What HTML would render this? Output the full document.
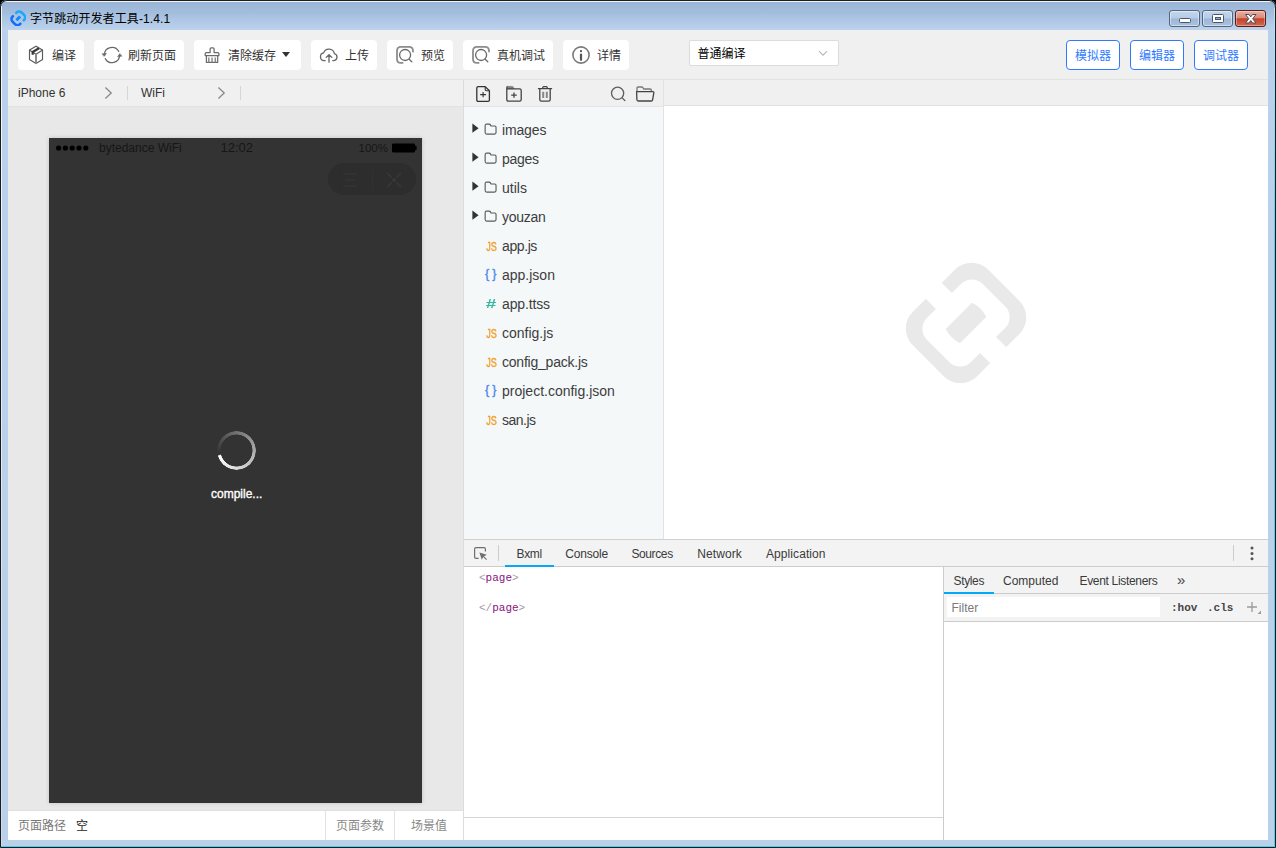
<!DOCTYPE html>
<html lang="zh-CN">
<head>
<meta charset="utf-8">
<title>字节跳动开发者工具-1.4.1</title>
<style>
*{box-sizing:border-box;margin:0;padding:0}
html,body{width:1276px;height:848px;overflow:hidden;background:#000}
body{font-family:"Liberation Sans","Noto Sans CJK SC",sans-serif;font-size:12px;color:#333;position:relative}
.abs{position:absolute}
#win{position:absolute;left:0;top:0;width:1276px;height:848px;background:#b9d1ea;border-radius:7px 7px 0 0;overflow:hidden}
#frame-dark{position:absolute;left:0;top:0;width:1276px;height:848px;border:1px solid #1c1c1c;border-radius:7px 7px 0 0;z-index:50;pointer-events:none}
#titlebar{position:absolute;left:1px;top:1px;width:1274px;height:29px;background:linear-gradient(#98b4d6 0%,#a3bddd 40%,#b4cce8 80%,#bcd3ec 100%)}
#title{position:absolute;left:30px;top:11px;letter-spacing:.1px;font-size:12px;line-height:16px;color:#000;white-space:nowrap}
#content{position:absolute;left:8px;top:30px;width:1260px;height:810px;background:#fff;overflow:hidden}
/* toolbar */
#toolbar{position:absolute;left:0;top:0;width:1260px;height:50px;background:#f0f0f0;border-bottom:1px solid #e2e2e2}
.tb{position:absolute;top:10px;height:30px;background:#fff;border-radius:4px;font-size:12px;line-height:30px;color:#333;white-space:nowrap}
.tb span{position:absolute;top:1px}
.tb svg{position:absolute}
.rb{position:absolute;top:10px;height:30px;background:#fff;border:1px solid #2f7bff;border-radius:4px;color:#2f7bff;font-size:12px;line-height:30px;text-align:center}
#sel{position:absolute;left:681px;top:10px;width:150px;height:26px;background:#fff;border:1px solid #dcdcdc;border-radius:2px;font-size:12px;line-height:26px;color:#000;padding-left:7.5px}
/* second row */
#simbar{position:absolute;left:0;top:50px;width:455px;height:27px;background:#f0f0f0;border-bottom:1px solid #e2e2e2;font-size:12px;color:#333}
#vline{position:absolute;left:455px;top:50px;width:1px;height:760px;background:#dcdcdc}
#sim{position:absolute;left:0;top:77px;width:455px;height:703px;background:#e8e8e8}
#phone{position:absolute;left:41px;top:31px;width:373px;height:665px;background:#333;box-shadow:0 0 4px rgba(0,0,0,.18)}
#simfoot{position:absolute;left:0;top:780px;width:455px;height:30px;background:#fff;border-top:1px solid #e0e0e0;font-size:12px;color:#666;line-height:30px}
/* tree */
#treebar{position:absolute;left:456px;top:50px;width:199px;height:26px;background:#f0f0f0}
#tree{position:absolute;left:456px;top:76px;width:199px;height:433px;background:#f4f8f9;border-top:1px solid #e4e4e4}
#treeline{position:absolute;left:655px;top:50px;width:1px;height:459px;background:#e2e2e2}
.ti{position:absolute;left:0;width:199px;height:29px;font-size:14px;line-height:29px;color:#3d3d3d;white-space:nowrap}
.ti .nm{position:absolute;left:38px;top:0}
.ti .ic{position:absolute;top:0;width:14px;text-align:center;transform-origin:50% 50%;line-height:29px}
/* editor */
#edbar{position:absolute;left:656px;top:50px;width:604px;height:26px;background:#f0f0f0;border-bottom:1px solid #e2e2e2}
#editor{position:absolute;left:656px;top:76px;width:604px;height:433px;background:#fff}
/* devtools */
#dtbar{position:absolute;left:456px;top:509px;width:804px;height:28px;background:#f3f3f3;border-top:1px solid #d0d0d0;border-bottom:1px solid #ccc;font-size:12px;color:#333}
#dtbar .t{position:absolute;top:2px;line-height:25px;color:#3a3a3a}
#elements{position:absolute;left:456px;top:537px;width:479px;height:250px;background:#fff;font-family:"Liberation Mono","DejaVu Sans Mono",monospace;font-size:11px}
#elfoot{position:absolute;left:456px;top:787px;width:479px;height:23px;background:#fff;border-top:1px solid #d4d4d4}
#stline{position:absolute;left:935px;top:537px;width:1px;height:273px;background:#ccc}
#styles{position:absolute;left:936px;top:537px;width:324px;height:273px;background:#fff}
#sttabs{position:absolute;left:0;top:0;width:324px;height:27px;background:#f3f3f3;border-bottom:1px solid #ccc;font-size:12px}
#sttabs .t{position:absolute;top:1px;line-height:26px;color:#3a3a3a}
#stfilter{position:absolute;left:0;top:27px;width:324px;height:28px;background:#f3f3f3;border-bottom:1px solid #ccc}
.mono{font-family:"Liberation Mono","DejaVu Sans Mono",monospace;font-size:11px;line-height:14px;color:#444;font-weight:bold}
.wc{position:absolute;top:10px;width:31px;height:17px;border:1px solid #55657d;border-radius:3px;background:linear-gradient(#c3d6ec 0%,#b5cbe6 48%,#9cb7d8 52%,#a9c2e0 100%);box-shadow:inset 0 0 0 1px rgba(255,255,255,.45)}
.wc svg{position:absolute;left:0;top:0}
.wx{border-color:#5c1d1a;background:linear-gradient(#eab1a4 0%,#dc8a78 45%,#c3432b 52%,#d4694f 100%);box-shadow:inset 0 0 0 1px rgba(255,255,255,.35)}
</style>
</head>
<body>
<div id="win">
  <div id="titlebar"></div>
  <div class="abs" style="left:5px;top:1px;width:1266px;height:1px;background:rgba(255,255,255,.85)"></div>
  <svg class="abs" style="left:9.7px;top:9.5px" width="16.6" height="16.6" viewBox="-58 -58 116 116"><g transform="rotate(45)" fill="none" stroke-width="18" stroke-linecap="round"><path d="M-37 -17 V-20 A25 25 0 0 1 -12 -45 H12 A25 25 0 0 1 37 -20 V-17" stroke="#1aa9ff"/><path d="M-37 17 V20 A25 25 0 0 0 -12 45 H12 A25 25 0 0 0 37 20 V17" stroke="#0d6eff"/><path d="M-10.5 -18 Q0 -21 10.5 -18 V18 Q0 21 -10.5 18 Z" fill="#1687ff" stroke="none"/></g></svg>
  <div class="wc" style="left:1169px"><svg width="29" height="15" viewBox="0 0 29 15"><rect x="9.5" y="7.5" width="11" height="4" rx="1" fill="#fff" stroke="#4a5668" stroke-width="1"/></svg></div>
  <div class="wc" style="left:1202px"><svg width="29" height="15" viewBox="0 0 29 15"><rect x="9.5" y="3.5" width="11" height="8" rx="1" fill="#fff" stroke="#4a5668" stroke-width="1"/><rect x="12.5" y="6.5" width="5" height="2" fill="#93aed0" stroke="#4a5668" stroke-width="1"/></svg></div>
  <div class="wc wx" style="left:1235px"><svg width="29" height="15" viewBox="0 0 29 15"><path d="M9.5 3.5 H13 L14.75 5.9 L16.5 3.5 H20 L16.7 7.75 L20 12 H16.5 L14.75 9.6 L13 12 H9.5 L12.8 7.75 Z" fill="#fff" stroke="#46505f" stroke-width="1" stroke-linejoin="round"/></svg></div>
  <div id="title">字节跳动开发者工具-1.4.1</div>
  <div id="content">
    <div id="toolbar">
      <div class="tb" style="left:10px;width:66px">
        <svg style="left:10px;top:5px" width="16" height="20" viewBox="0 0 16 20" fill="none" stroke="#5c5c5c" stroke-width="1.2" stroke-linejoin="round" stroke-linecap="round"><path d="M8 1.2 L14.5 5 V14.6 L8 18.4 L1.5 14.6 V5 Z"/><path d="M1.7 5.2 L8 9.2 L14.3 5.2"/><path d="M8 9.6 V18.2" stroke="#8a8a8a" stroke-width="2"/><path d="M11 3.2 L4.7 7 V9.8" stroke="#383838" stroke-width="2.2" stroke-linecap="butt"/></svg>
        <span style="left:34px">编译</span></div>
      <div class="tb" style="left:86px;width:90px">
        <svg style="left:7px;top:5px" width="22" height="20" viewBox="0 0 22 20" fill="none" stroke="#6a6a6a" stroke-width="1.25" stroke-linecap="round" stroke-linejoin="round"><path d="M3.4 10 A7.6 7.6 0 0 1 17.7 6.4"/><path d="M18.6 10 A7.6 7.6 0 0 1 4.3 13.6"/><path d="M1.4 8.8 L5.4 8.4 L3.3 11.2 Z" fill="#6a6a6a" stroke-width=".6"/><path d="M20.6 11.2 L16.6 11.6 L18.7 8.8 Z" fill="#6a6a6a" stroke-width=".6"/></svg>
        <span style="left:34px">刷新页面</span></div>
      <div class="tb" style="left:186px;width:107px">
        <svg style="left:9px;top:6px" width="18" height="19" viewBox="0 0 18 19" fill="none" stroke="#6a6a6a" stroke-width="1.25" stroke-linejoin="round"><path d="M7.1 3 Q7.1 1.8 8.3 1.8 H9.9 Q11.1 1.8 11.1 3 V6.6 H14.9 Q15.9 6.6 15.9 7.6 V9.5 H2.2 V7.6 Q2.2 6.6 3.2 6.6 H7.1 Z"/><path d="M3.4 9.7 V16.3 H14.7 V9.7"/><path d="M5.8 11.6 V16.2 M9.05 11.6 V16.2 M12.3 11.6 V16.2" stroke="#8a8a8a" stroke-width="1.5"/></svg>
        <span style="left:34px">清除缓存</span>
        <svg style="left:88px;top:12px" width="8" height="5" viewBox="0 0 8 5"><path d="M0 0 H8 L4 5 Z" fill="#333"/></svg></div>
      <div class="tb" style="left:303px;width:66px">
        <svg style="left:8px;top:7.6px" width="20" height="16" viewBox="0 0 20 16" fill="none" stroke="#666" stroke-width="1.3" stroke-linecap="round" stroke-linejoin="round"><path d="M6.2 12.6 H5 A3.9 3.9 0 0 1 4.6 4.9 A5.6 5.6 0 0 1 15.4 5.6 A3.6 3.6 0 0 1 15 12.6 H13.8"/><path d="M10 14.2 V6.8 M7.2 9.4 L10 6.6 L12.8 9.4"/></svg>
        <span style="left:34px">上传</span></div>
      <div class="tb" style="left:379px;width:66px">
        <svg style="left:8px;top:5px" width="20" height="20" viewBox="0 0 20 20" fill="none" stroke="#6a6a6a" stroke-width="1.3" stroke-linecap="round"><path d="M18 6.6 V5.9 Q18 1.9 14 1.9 H6 Q2 1.9 2 5.9 V13.9 Q2 17.9 6 17.9 H7.6" stroke="#8c8c8c" stroke-width="1.8"/><circle cx="10.1" cy="10" r="5.5"/><path d="M14.2 14.2 L16.8 16.8"/></svg>
        <span style="left:34px">预览</span></div>
      <div class="tb" style="left:455px;width:90px">
        <svg style="left:8px;top:5px" width="20" height="20" viewBox="0 0 20 20" fill="none" stroke="#6a6a6a" stroke-width="1.3" stroke-linecap="round"><path d="M18 6.6 V5.9 Q18 1.9 14 1.9 H6 Q2 1.9 2 5.9 V13.9 Q2 17.9 6 17.9 H7.6" stroke="#8c8c8c" stroke-width="1.8"/><circle cx="10.1" cy="10" r="5.5"/><path d="M14.2 14.2 L16.8 16.8"/></svg>
        <span style="left:34px">真机调试</span></div>
      <div class="tb" style="left:555px;width:66px">
        <svg style="left:8px;top:5px" width="20" height="20" viewBox="0 0 20 20" fill="none" stroke="#666" stroke-width="1.3"><circle cx="10" cy="10" r="8.1" stroke="#7a7a7a" stroke-width="1.6"/><path d="M10 9.6 V14.8" stroke="#555" stroke-width="2.2" stroke-linecap="round"/><circle cx="10" cy="6.2" r="1.15" fill="#5a5a5a" stroke="none"/></svg>
        <span style="left:34px">详情</span></div>
      <div id="sel">普通编译<svg class="abs" style="left:128px;top:9px" width="10" height="7" viewBox="0 0 10 7" fill="none" stroke="#b8b8b8" stroke-width="1.2"><path d="M1 1.2 L5 5.2 L9 1.2"/></svg></div>
      <div class="rb" style="left:1058px;width:54px">模拟器</div>
      <div class="rb" style="left:1122px;width:54px">编辑器</div>
      <div class="rb" style="left:1186px;width:54px">调试器</div>
    </div>
    <div id="simbar">
      <span class="abs" style="left:10px;top:6px;line-height:14px">iPhone 6</span>
      <svg class="abs" style="left:96px;top:6px" width="9" height="14" viewBox="0 0 9 14" fill="none" stroke="#888" stroke-width="1.3"><path d="M1.4 1.6 L7.2 7 L1.4 12.4"/></svg>
      <div class="abs" style="left:119px;top:6px;width:1px;height:14px;background:#d6d6d6"></div>
      <span class="abs" style="left:133px;top:6px;line-height:14px">WiFi</span>
      <svg class="abs" style="left:209px;top:6px" width="9" height="14" viewBox="0 0 9 14" fill="none" stroke="#888" stroke-width="1.3"><path d="M1.4 1.6 L7.2 7 L1.4 12.4"/></svg>
      <div class="abs" style="left:232px;top:6px;width:1px;height:14px;background:#d6d6d6"></div>
    </div>
    <div id="sim"><div id="phone">
        <svg class="abs" style="left:6px;top:6px" width="36" height="8" viewBox="0 0 36 8"><g fill="#000"><circle cx="3.6" cy="4" r="2.6"/><circle cx="10.4" cy="4" r="2.6"/><circle cx="17.2" cy="4" r="2.6"/><circle cx="24" cy="4" r="2.6"/><circle cx="30.8" cy="4" r="2.6"/></g></svg>
        <span class="abs" style="left:50px;top:2px;font-size:12px;line-height:16px;color:#161616">bytedance WiFi</span>
        <span class="abs" style="left:171.5px;top:2px;font-size:13px;line-height:16px;color:#161616">12:02</span>
        <span class="abs" style="left:309.5px;top:2px;font-size:11.5px;line-height:16px;color:#161616">100%</span>
        <svg class="abs" style="left:342px;top:5px" width="27" height="10" viewBox="0 0 27 10"><rect x="1" y=".5" width="23" height="9" rx="1.2" fill="#000"/><rect x="23.6" y="2.8" width="2" height="4.4" rx="1" fill="#000"/></svg>
        <div class="abs" style="left:279px;top:25px;width:88px;height:32px;border-radius:16px;background:#2d2d2d"></div>
        <svg class="abs" style="left:279px;top:25px" width="88" height="32" viewBox="0 0 88 32" fill="none" stroke="#393939" stroke-width="1.2"><path d="M15 11 H29 M17 17 H27 M15 23 H29"/><path d="M44.5 7 V27" stroke="#313131" stroke-width="1"/><path d="M59 10 L73 24 M73 10 L59 24"/><circle cx="66" cy="17" r="3.2" fill="#2d2d2d" stroke="none"/><circle cx="66" cy="17" r="1.7" fill="#3b3b3b" stroke="none"/></svg>
        <div class="abs" id="spin" style="left:168px;top:293px;width:39px;height:39px;border-radius:50%;background:conic-gradient(from 261deg,rgba(255,255,255,0) 0deg,rgba(255,255,255,.12) 40deg,rgba(255,255,255,.38) 120deg,rgba(255,255,255,.62) 200deg,rgba(255,255,255,.85) 290deg,#fff 352deg,rgba(255,255,255,0) 356deg);-webkit-mask:radial-gradient(circle,transparent 15.7px,#000 16.3px,#000 19.1px,transparent 19.6px);mask:radial-gradient(circle,transparent 15.7px,#000 16.3px,#000 19.1px,transparent 19.6px)"></div>
        <span class="abs" style="left:162px;top:348px;font-size:12px;line-height:16px;color:#fff;-webkit-text-stroke:.35px #fff">compile...</span>
      </div></div>
    <div id="simfoot">
      <span class="abs" style="left:10px;top:0;color:#777">页面路径</span>
      <span class="abs" style="left:68px;top:0;color:#222">空</span>
      <div class="abs" style="left:317px;top:0;width:1px;height:29px;background:#e2e2e2"></div>
      <span class="abs" style="left:328px;top:0;color:#888">页面参数</span>
      <div class="abs" style="left:386px;top:0;width:1px;height:29px;background:#e2e2e2"></div>
      <span class="abs" style="left:403px;top:0;color:#888">场景值</span>
    </div>
    <div id="vline"></div>
    <div id="treebar">
      <svg class="abs" style="left:11px;top:5px" width="16" height="18" viewBox="0 0 16 18" fill="none" stroke="#333" stroke-width="1.3" stroke-linejoin="round"><path d="M3.2 1.6 H10.2 L14.4 5.8 V15 Q14.4 16.4 13 16.4 H3.2 Q1.8 16.4 1.8 15 V3 Q1.8 1.6 3.2 1.6 Z"/><path d="M10.2 1.8 V4.6 Q10.2 5.8 11.4 5.8 H14.2" stroke-width="1.1"/><path d="M5.2 9.6 H11 M8.1 7 V12.2" stroke-width="1.1"/></svg>
      <svg class="abs" style="left:41px;top:5px" width="18" height="18" viewBox="0 0 18 18" fill="none" stroke="#444" stroke-width="1.3" stroke-linejoin="round"><path d="M2 1.4 H7.2 Q8 1.4 8.4 2.2 L9 3.6 H2 Z" fill="#808080" stroke="#808080" stroke-width=".8"/><path d="M1.8 3.8 H14.6 Q16.2 3.8 16.2 5.4 V14.6 Q16.2 16.2 14.6 16.2 H3.4 Q1.8 16.2 1.8 14.6 Z"/><path d="M1.8 4 V2.6 Q1.8 1.6 2.8 1.6" stroke="#555"/><path d="M6.2 10.2 H11.8 M9 7.6 V12.8" stroke-width="1.3"/></svg>
      <svg class="abs" style="left:73px;top:4px" width="16" height="19" viewBox="0 0 16 19" fill="none" stroke="#444" stroke-width="1.3" stroke-linejoin="round" stroke-linecap="round"><path d="M1.4 4.6 H14.6"/><path d="M5.8 4.4 V3.6 Q5.8 2.6 6.8 2.6 H9.2 Q10.2 2.6 10.2 3.6 V4.4"/><path d="M2.8 4.8 V15.6 Q2.8 17.2 4.4 17.2 H11.6 Q13.2 17.2 13.2 15.6 V4.8"/><path d="M6.2 7.8 V14 M9.8 7.8 V14" stroke="#888" stroke-width="2" stroke-linecap="butt"/></svg>
      <svg class="abs" style="left:145px;top:5px" width="18" height="18" viewBox="0 0 18 18" fill="none" stroke="#5e5e5e" stroke-width="1.3" stroke-linecap="round"><circle cx="8.6" cy="8.3" r="6.1"/><path d="M13.2 12.9 L15.8 15.5"/></svg>
      <svg class="abs" style="left:171px;top:5px" width="20" height="18" viewBox="0 0 20 18" fill="none" stroke-width="1.3" stroke-linejoin="round"><path d="M2 6.4 V3.2 Q2 2 3.2 2 H6.6 Q7.6 2 8 2.8 L8.6 4 H15 Q16.4 4 16.4 5.4 V6.2" stroke="#777"/><path d="M1.6 6.6 H17.8 Q19 6.6 18.8 7.8 L17.6 14.8 Q17.4 16 16.2 16 H3.2 Q2 16 1.9 14.8 Z" stroke="#444"/></svg>
    </div>
    <div id="tree">
      <div class="ti" style="top:9px"><svg class="abs" style="left:8px;top:7px" width="8" height="11" viewBox="0 0 8 11"><path d="M.4 .6 L6.6 5.2 L.4 9.8 Z" fill="#333"/></svg><svg class="abs" style="left:20.3px;top:6.8px" width="13.2" height="12.2" viewBox="0 0 14 13" fill="none" stroke="#5a5a5a" stroke-width="1.2" stroke-linejoin="round"><path d="M1.2 2.6 Q1.2 1.2 2.6 1.2 H5.4 Q6.4 1.2 6.8 2 L7.4 3.2 H11.4 Q12.8 3.2 12.8 4.6 V10.2 Q12.8 11.8 11.2 11.8 H2.8 Q1.2 11.8 1.2 10.2 Z"/></svg><span class="nm" style="letter-spacing:-.15px">images</span></div>
      <div class="ti" style="top:38px"><svg class="abs" style="left:8px;top:7px" width="8" height="11" viewBox="0 0 8 11"><path d="M.4 .6 L6.6 5.2 L.4 9.8 Z" fill="#333"/></svg><svg class="abs" style="left:20.3px;top:6.8px" width="13.2" height="12.2" viewBox="0 0 14 13" fill="none" stroke="#5a5a5a" stroke-width="1.2" stroke-linejoin="round"><path d="M1.2 2.6 Q1.2 1.2 2.6 1.2 H5.4 Q6.4 1.2 6.8 2 L7.4 3.2 H11.4 Q12.8 3.2 12.8 4.6 V10.2 Q12.8 11.8 11.2 11.8 H2.8 Q1.2 11.8 1.2 10.2 Z"/></svg><span class="nm" style="letter-spacing:-.3px">pages</span></div>
      <div class="ti" style="top:67px"><svg class="abs" style="left:8px;top:7px" width="8" height="11" viewBox="0 0 8 11"><path d="M.4 .6 L6.6 5.2 L.4 9.8 Z" fill="#333"/></svg><svg class="abs" style="left:20.3px;top:6.8px" width="13.2" height="12.2" viewBox="0 0 14 13" fill="none" stroke="#5a5a5a" stroke-width="1.2" stroke-linejoin="round"><path d="M1.2 2.6 Q1.2 1.2 2.6 1.2 H5.4 Q6.4 1.2 6.8 2 L7.4 3.2 H11.4 Q12.8 3.2 12.8 4.6 V10.2 Q12.8 11.8 11.2 11.8 H2.8 Q1.2 11.8 1.2 10.2 Z"/></svg><span class="nm">utils</span></div>
      <div class="ti" style="top:96px"><svg class="abs" style="left:8px;top:7px" width="8" height="11" viewBox="0 0 8 11"><path d="M.4 .6 L6.6 5.2 L.4 9.8 Z" fill="#333"/></svg><svg class="abs" style="left:20.3px;top:6.8px" width="13.2" height="12.2" viewBox="0 0 14 13" fill="none" stroke="#5a5a5a" stroke-width="1.2" stroke-linejoin="round"><path d="M1.2 2.6 Q1.2 1.2 2.6 1.2 H5.4 Q6.4 1.2 6.8 2 L7.4 3.2 H11.4 Q12.8 3.2 12.8 4.6 V10.2 Q12.8 11.8 11.2 11.8 H2.8 Q1.2 11.8 1.2 10.2 Z"/></svg><span class="nm" style="letter-spacing:-.25px">youzan</span></div>
      <div class="ti" style="top:125px"><span class="ic" style="color:#f0a030;transform:scaleX(.67);font-size:13.5px;left:19.6px;-webkit-text-stroke:.45px #f0a030;top:-.3px">JS</span><span class="nm" style="letter-spacing:-.4px">app.js</span></div>
      <div class="ti" style="top:154px"><span class="ic" style="color:#4f86e8;font-size:12.5px;left:21px;letter-spacing:3px;top:-1px;-webkit-text-stroke:.35px #4f86e8">{}</span><span class="nm">app.json</span></div>
      <div class="ti" style="top:183px"><span class="ic" style="color:#36b99c;font-size:13px;font-weight:bold;left:20.2px;transform:scaleX(1.45);top:-.9px">#</span><span class="nm" style="letter-spacing:-.15px">app.ttss</span></div>
      <div class="ti" style="top:212px"><span class="ic" style="color:#f0a030;transform:scaleX(.67);font-size:13.5px;left:19.6px;-webkit-text-stroke:.45px #f0a030;top:-.3px">JS</span><span class="nm">config.js</span></div>
      <div class="ti" style="top:241px"><span class="ic" style="color:#f0a030;transform:scaleX(.67);font-size:13.5px;left:19.6px;-webkit-text-stroke:.45px #f0a030;top:-.3px">JS</span><span class="nm" style="letter-spacing:-.22px">config_pack.js</span></div>
      <div class="ti" style="top:270px"><span class="ic" style="color:#4f86e8;font-size:12.5px;left:21px;letter-spacing:3px;top:-1px;-webkit-text-stroke:.35px #4f86e8">{}</span><span class="nm">project.config.json</span></div>
      <div class="ti" style="top:299px"><span class="ic" style="color:#f0a030;transform:scaleX(.67);font-size:13.5px;left:19.6px;-webkit-text-stroke:.45px #f0a030;top:-.3px">JS</span><span class="nm" style="letter-spacing:-.5px">san.js</span></div>
    </div>
    <div id="treeline"></div>
    <div id="edbar"></div>
    <div id="editor">
      <svg class="abs" style="left:240px;top:155px" width="124" height="124" viewBox="-62 -62 124 124"><g transform="rotate(45)"><path fill="#e9e9e9" fill-rule="evenodd" d="M-22.2 -53.3 H22.2 A23.3 23.3 0 0 1 45.5 -29.999999999999996 V29.999999999999996 A23.3 23.3 0 0 1 22.2 53.3 H-22.2 A23.3 23.3 0 0 1 -45.5 29.999999999999996 V-29.999999999999996 A23.3 23.3 0 0 1 -22.2 -53.3 Z M-15.799999999999999 -39.5 H15.799999999999999 A15.4 15.4 0 0 1 31.2 -24.1 V24.1 A15.4 15.4 0 0 1 15.799999999999999 39.5 H-15.799999999999999 A15.4 15.4 0 0 1 -31.2 24.1 V-24.1 A15.4 15.4 0 0 1 -15.799999999999999 -39.5 Z"/><rect x="-50" y="-11.3" width="100" height="22.6" fill="#fff"/><path d="M-10 -18.6 Q0 -22 10 -18.6 V18.6 Q0 22 -10 18.6 Z" fill="#e9e9e9"/></g></svg>
    </div>
    <div id="dtbar">
      <svg class="abs" style="left:9px;top:6px" width="16" height="16" viewBox="0 0 16 16" fill="none"><path d="M5.6 12.4 H3 Q1.6 12.4 1.6 11 V3 Q1.6 1.6 3 1.6 H11 Q12.4 1.6 12.4 3 V5.4" stroke="#6e6e6e" stroke-width="1.2"/><path d="M6.4 6.4 L13.8 8.8 L11 10.2 L14 13.2 L13.2 14 L10.2 11 L8.8 13.8 Z" fill="#6e6e6e"/></svg>
      <div class="abs" style="left:34px;top:5px;width:1px;height:16px;background:#ccc"></div>
      <span class="t" style="left:52.5px;letter-spacing:-.35px">Bxml</span>
      <span class="t" style="left:101.3px;letter-spacing:-.2px">Console</span>
      <span class="t" style="left:167.4px;letter-spacing:-.38px">Sources</span>
      <span class="t" style="left:233.2px;letter-spacing:.1px">Network</span>
      <span class="t" style="left:302px;letter-spacing:.08px">Application</span>
      <div class="abs" style="left:41px;top:25px;width:49px;height:2px;background:#03a9f4"></div>
      <div class="abs" style="left:769px;top:5px;width:1px;height:16px;background:#ccc"></div>
      <svg class="abs" style="left:786px;top:6px" width="4" height="15" viewBox="0 0 4 15" fill="#555"><circle cx="2" cy="2" r="1.5"/><circle cx="2" cy="7.4" r="1.5"/><circle cx="2" cy="12.8" r="1.5"/></svg>
    </div>
    <div id="elements">
      <div class="abs" style="left:15px;top:4px;line-height:14px;color:#881280"><span style="color:#a894a6">&lt;</span>page<span style="color:#a894a6">&gt;</span></div>
      <div class="abs" style="left:15px;top:34px;line-height:14px;color:#881280"><span style="color:#a894a6">&lt;/</span>page<span style="color:#a894a6">&gt;</span></div>
    </div>
    <div id="elfoot"></div>
    <div id="stline"></div>
    <div id="styles"><div id="sttabs">
        <span class="t" style="left:9.5px;letter-spacing:-.35px">Styles</span>
        <span class="t" style="left:59px">Computed</span>
        <span class="t" style="left:135.5px;letter-spacing:-.32px">Event Listeners</span>
        <span class="t" style="left:233px;font-size:15px;top:0;color:#444">&#187;</span>
        <div class="abs" style="left:0;top:25px;width:50px;height:2px;background:#03a9f4"></div>
      </div><div id="stfilter">
        <div class="abs" style="left:3px;top:3px;width:213px;height:20px;background:#fff"></div>
        <span class="abs" style="left:7.5px;top:5.5px;font-size:12px;line-height:16px;color:#7a7a7a">Filter</span>
        <span class="abs mono" style="left:227px;top:6.5px">:hov</span>
        <span class="abs mono" style="left:263px;top:6.5px">.cls</span>
        <svg class="abs" style="left:302px;top:7px" width="16" height="14" viewBox="0 0 16 14"><path d="M1 6 H11 M6 1 V11" stroke="#9a9a9a" stroke-width="1.3" fill="none"/><path d="M15 9.6 V13 H11.6 Z" fill="#9a9a9a"/></svg>
      </div></div>
  </div>
</div>
<div class="abs" style="left:1px;top:846px;width:1274px;height:1px;background:#3ad6f6;z-index:40"></div>
<div class="abs" style="left:1274px;top:8px;width:1px;height:839px;background:linear-gradient(#b8e6f6,#3ad6f6 30%);z-index:40"></div>
<div class="abs" style="left:1px;top:6px;width:1px;height:840px;background:linear-gradient(rgba(255,255,255,.9),rgba(255,255,255,.25));z-index:40"></div>
<div id="frame-dark"></div>
</body>
</html>
